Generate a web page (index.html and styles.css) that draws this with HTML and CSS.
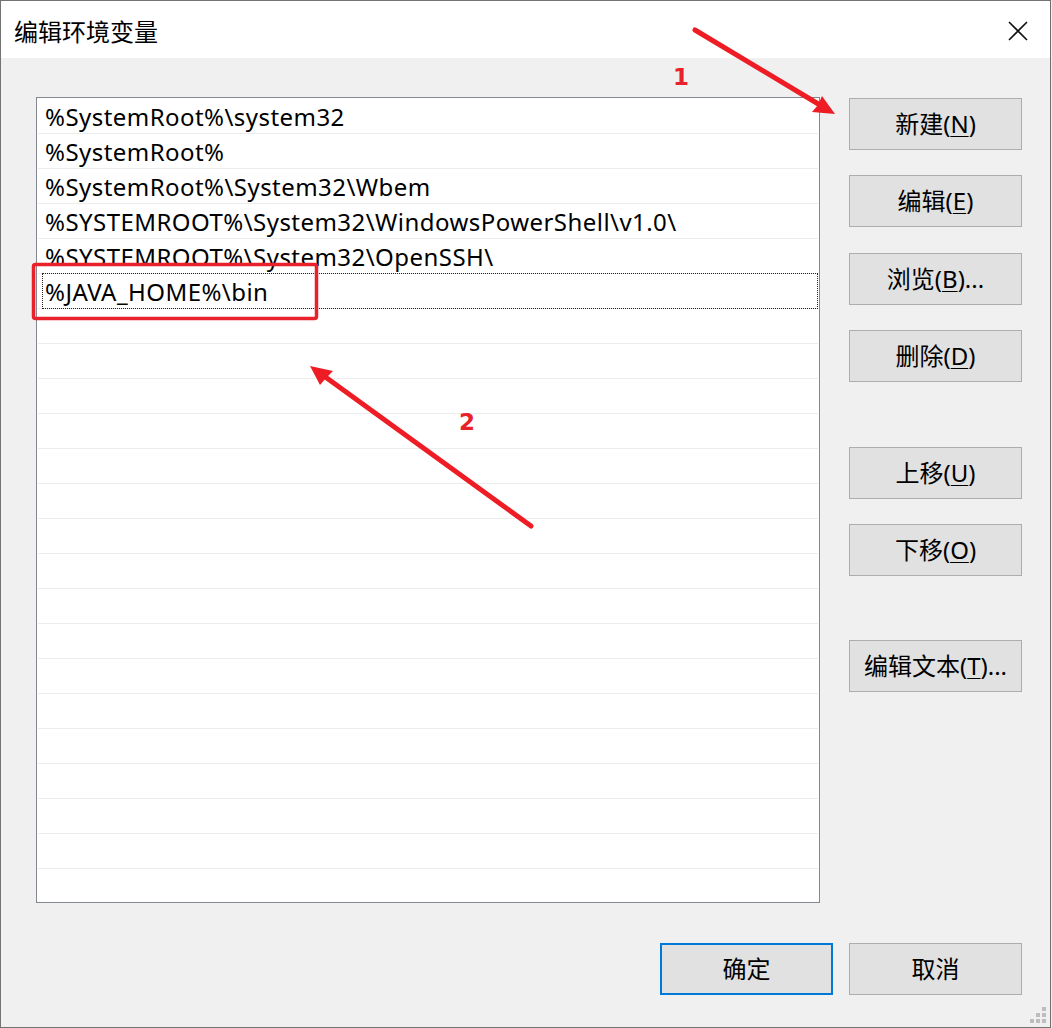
FILE: index.html
```html
<!DOCTYPE html>
<html lang="zh-CN">
<head>
<meta charset="utf-8">
<title>编辑环境变量</title>
<link rel="stylesheet" href="styles.css">
</head>
<body>
<div class="window">
  <div class="titlebar">
    <span class="title">编辑环境变量</span>
    <svg class="close" width="20" height="20" viewBox="0 0 20 20"><path d="M1 1 L19 19 M19 1 L1 19" stroke="#111" stroke-width="1.6" fill="none"/></svg>
  </div>
  <div class="body">
    <div class="main">
      <div class="list">
        <div class="row">%SystemRoot%\system32</div>
        <div class="row">%SystemRoot%</div>
        <div class="row">%SystemRoot%\System32\Wbem</div>
        <div class="row">%SYSTEMROOT%\System32\WindowsPowerShell\v1.0\</div>
        <div class="row">%SYSTEMROOT%\System32\OpenSSH\</div>
        <div class="row focused">%JAVA_HOME%\bin</div>
        <div class="row"></div>
        <div class="row"></div>
        <div class="row"></div>
        <div class="row"></div>
        <div class="row"></div>
        <div class="row"></div>
        <div class="row"></div>
        <div class="row"></div>
        <div class="row"></div>
        <div class="row"></div>
        <div class="row"></div>
        <div class="row"></div>
        <div class="row"></div>
        <div class="row"></div>
        <div class="row"></div>
        <div class="row"></div>
        <div class="row last"></div>
      </div>
      <div class="side">
        <button class="btn">新建(<u>N</u>)</button>
        <button class="btn g25">编辑(<u>E</u>)</button>
        <button class="btn g26">浏览(<u>B</u>)...</button>
        <button class="btn g25">删除(<u>D</u>)</button>
        <button class="btn g65">上移(<u>U</u>)</button>
        <button class="btn g25">下移(<u>O</u>)</button>
        <button class="btn g64">编辑文本(<u>T</u>)...</button>
      </div>
    </div>
    <div class="footer">
      <button class="btn default">确定</button>
      <button class="btn">取消</button>
    </div>
    <div class="grip">
      <span class="dot d1"></span><span class="dot d2"></span><span class="dot d3"></span>
      <span class="dot d4"></span><span class="dot d5"></span><span class="dot d6"></span>
    </div>
  </div>
  <svg class="annot" width="1052" height="1028" viewBox="0 0 1052 1028">
    <rect x="33.5" y="264.5" width="283" height="54" rx="2" fill="none" stroke="#e8212b" stroke-width="3.5"/>
    <line x1="695" y1="30" x2="820" y2="105" stroke="#ee1c24" stroke-width="5" stroke-linecap="round"/>
    <polygon points="835,114 812,112 818,105 822,96" fill="#ee1c24"/>
    <line x1="531" y1="526" x2="324" y2="376" stroke="#ee1c24" stroke-width="5" stroke-linecap="round"/>
    <polygon points="310,366 333,371 326,378 320,385" fill="#ee1c24"/>
    <text x="673" y="85" class="num">1</text>
    <text x="459" y="430" class="num">2</text>
  </svg>
</div>
</body>
</html>
```
FILE: styles.css
```css
* { box-sizing: border-box; }
html, body { margin: 0; padding: 0; background: #f0f0f0; }
body { font-family: "Noto Sans", "Noto Sans CJK SC", sans-serif; font-size: 24px; color: #000; }

.window {
  position: relative;
  width: 1051px;
  height: 1028px;
  border: 1px solid #737373;
  border-right-color: #6e6e6e;
  background: #f0f0f0;
  display: flex;
  flex-direction: column;
}

.titlebar {
  height: 57px;
  background: #fff;
  display: flex;
  align-items: center;
  justify-content: space-between;
  padding: 2px 22px 0 13px;
}
.title { font-family: "Noto Sans CJK SC", sans-serif; font-size: 24px; color: #000; }
.close { display: block; }

.body {
  flex: 1;
  position: relative;
  padding: 39px 28px 0 35px;
  display: flex;
  flex-direction: column;
}
.main { display: flex; }

.list {
  width: 784px;
  height: 806px;
  border: 1px solid #828790;
  background: #fff;
  padding: 1px;
  overflow: hidden;
}
.row {
  position: relative;
  height: 35px;
  line-height: 35px;
  border-bottom: 1px solid #ececec;
  padding-left: 7px;
  white-space: nowrap;
  letter-spacing: 0.45px;
}
.row.last { border-bottom: none; }
.row.focused::after {
  content: "";
  position: absolute;
  left: 4px; right: 0; top: -1px; bottom: -1px;
  border: 1px dotted #222;
}

.side {
  margin-left: 29px;
  padding-top: 1px;
  display: flex;
  flex-direction: column;
}
.btn {
  width: 173px;
  height: 52px;
  background: #e1e1e1;
  border: 1px solid #adadad;
  font-family: "Noto Sans", "Noto Sans CJK SC", sans-serif;
  font-size: 24px;
  color: #000;
  padding: 0;
  line-height: 1;
}
.btn u { text-decoration-thickness: 1px; text-underline-offset: 3px; }
.g25 { margin-top: 25px; }
.g26 { margin-top: 26px; }
.g65 { margin-top: 65px; }
.g64 { margin-top: 64px; }

.footer {
  margin-top: 40px;
  display: flex;
  justify-content: flex-end;
  gap: 16px;
}
.btn.default { border: 2px solid #0078d7; }

.grip { position: absolute; right: 3px; bottom: 4px; width: 17px; height: 17px; }
.dot { position: absolute; width: 4px; height: 4px; background: #bdbdbd; }
.d1 { right: 1px; top: 1px; }
.d2 { right: 1px; top: 7px; }
.d3 { right: 7px; top: 7px; }
.d4 { right: 1px; top: 13px; }
.d5 { right: 7px; top: 13px; }
.d6 { right: 13px; top: 13px; }

.annot { position: absolute; left: -1px; top: -1px; pointer-events: none; }
.num { font-family: "DejaVu Sans", sans-serif; font-weight: bold; font-size: 23px; fill: #e8212b; }
```
